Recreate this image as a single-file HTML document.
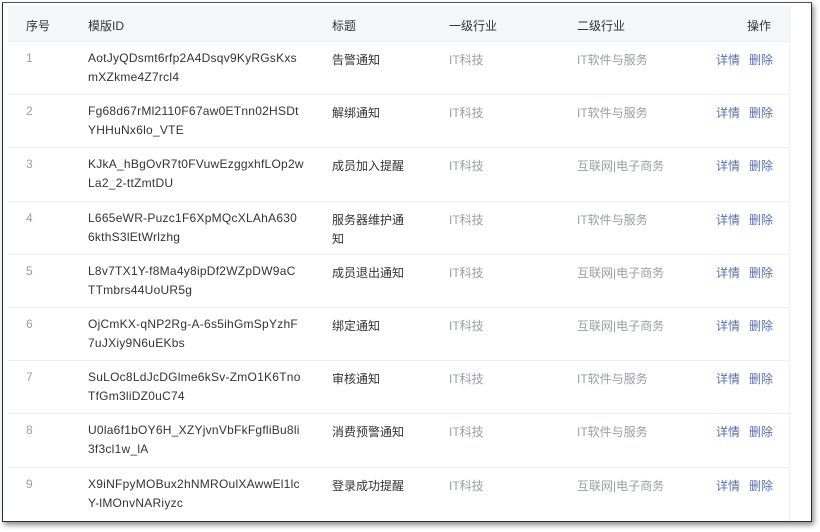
<!DOCTYPE html>
<html><head><meta charset="utf-8"><style>
body{margin:0;width:820px;height:532px;background:#fff;position:relative;overflow:hidden;font-family:"Liberation Sans","Noto Sans CJK SC",sans-serif;font-size:12px}
.frame{position:absolute;left:2px;top:2px;width:808px;height:518px;border:1.5px solid #2b2f36;border-top-color:#555;box-shadow:2px 3px 5px rgba(0,0,0,.45);background:#fff}
.hd{position:absolute;left:8px;top:6px;width:781px;height:35px;background:#f5f6f8;color:#333}
.c{position:absolute;white-space:nowrap}
.row{position:absolute;left:8px;width:781px;height:53px;border-top:1px solid #ebedf0}
.g{color:#9a9ea6}.d{color:#333}.b{color:#5a6fa8}
.id{letter-spacing:0.25px}
.tl{position:absolute;left:789px;top:6px;width:1px;height:515px;background:#eceef1}
</style></head><body>
<div class="frame"></div>
<div class="tl"></div>
<div class="hd">
<span class="c" style="left:18px;top:11px">序号</span>
<span class="c" style="left:80px;top:11px">模版ID</span>
<span class="c" style="left:324px;top:11px">标题</span>
<span class="c" style="left:441px;top:11px">一级行业</span>
<span class="c" style="left:569px;top:11px">二级行业</span>
<span class="c" style="left:739px;top:11px">操作</span>
</div>
<div id="rows"></div>
<script>
var d=[["1","AotJyQDsmt6rfp2A4Dsqv9KyRGsKxs","mXZkme4Z7rcl4","告警通知","","IT软件与服务"],
["2","Fg68d67rMl2110F67aw0ETnn02HSDt","YHHuNx6lo_VTE","解绑通知","","IT软件与服务"],
["3","KJkA_hBgOvR7t0FVuwEzggxhfLOp2w","La2_2-ttZmtDU","成员加入提醒","","互联网|电子商务"],
["4","L665eWR-Puzc1F6XpMQcXLAhA630","6kthS3lEtWrlzhg","服务器维护通","知","IT软件与服务"],
["5","L8v7TX1Y-f8Ma4y8ipDf2WZpDW9aC","TTmbrs44UoUR5g","成员退出通知","","互联网|电子商务"],
["6","OjCmKX-qNP2Rg-A-6s5ihGmSpYzhF","7uJXiy9N6uEKbs","绑定通知","","互联网|电子商务"],
["7","SuLOc8LdJcDGlme6kSv-ZmO1K6Tno","TfGm3liDZ0uC74","审核通知","","IT软件与服务"],
["8","U0la6f1bOY6H_XZYjvnVbFkFgfliBu8li","3f3cl1w_lA","消费预警通知","","IT软件与服务"],
["9","X9iNFpyMOBux2hNMROulXAwwEl1lc","Y-lMOnvNARiyzc","登录成功提醒","","互联网|电子商务"]];
var h="";d.forEach(function(r,i){var t=41+i*53.2;
h+='<div class="row" style="top:'+t+'px">'+
'<span class="c g" style="left:18px;top:9px">'+r[0]+'</span>'+
'<span class="c d id" style="left:80px;top:9px">'+r[1]+'</span>'+
'<span class="c d id" style="left:80px;top:28px">'+r[2]+'</span>'+
'<span class="c d" style="left:324px;top:9px">'+r[3]+'</span>'+
(r[4]?'<span class="c d" style="left:324px;top:28px">'+r[4]+'</span>':'')+
'<span class="c g" style="left:441px;top:9px">IT科技</span>'+
'<span class="c g" style="left:569px;top:9px">'+r[5]+'</span>'+
'<span class="c b" style="left:708px;top:9px">详情</span>'+
'<span class="c b" style="left:741px;top:9px">删除</span></div>';});
document.getElementById("rows").innerHTML=h;
</script>
</body></html>
